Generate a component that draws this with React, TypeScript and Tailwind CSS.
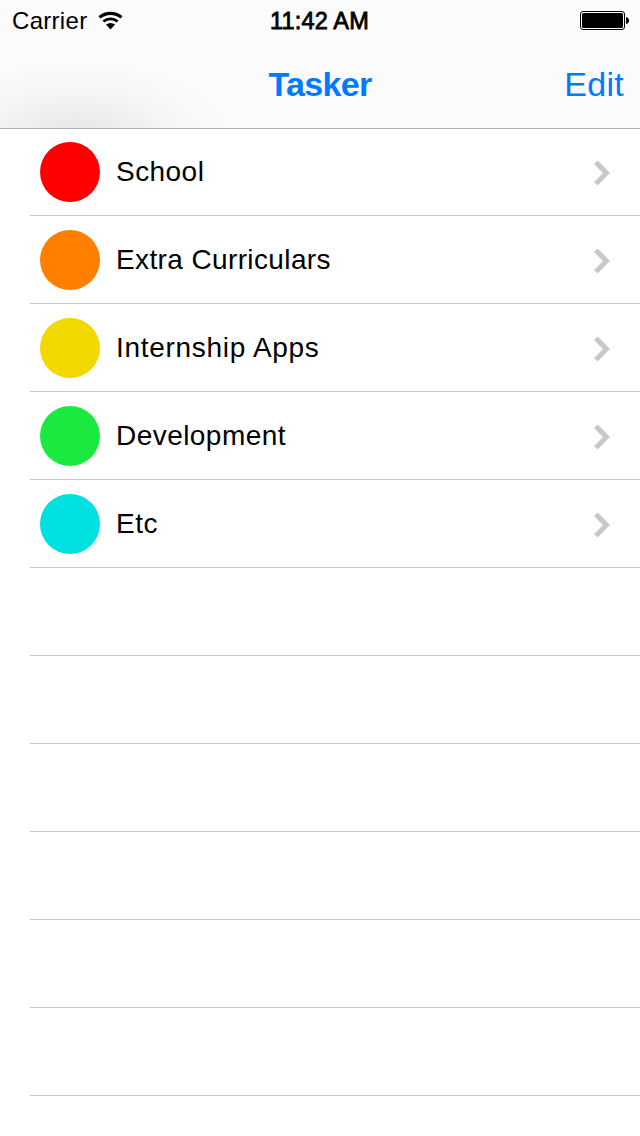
const rows = [
  { name: 'School', color: 'bg-[#ff0000]', tracking: 'tracking-[0.45px]' },
  { name: 'Extra Curriculars', color: 'bg-[#ff8000]', tracking: 'tracking-[0.38px]' },
  { name: 'Internship Apps', color: 'bg-[#f0d800]', tracking: 'tracking-[0.7px]' },
  { name: 'Development', color: 'bg-[#1aea3f]', tracking: 'tracking-[0.45px]' },
  { name: 'Etc', color: 'bg-[#00e0e0]', tracking: 'tracking-[0.5px]' },
];

const emptyRows = [0, 1, 2, 3, 4, 5, 6];

function WifiIcon() {
  return (
    <svg width="26" height="19" viewBox="0 0 26 19">
      <path d="M1.500 6.400a16.800 16.800 0 0 1 22 0" fill="none" stroke="#000" strokeWidth="3.200" />
      <path d="M5.400 10.500a11 11 0 0 1 14.200 0" fill="none" stroke="#000" strokeWidth="2.900" />
      <path d="M7.900 13.500q4.600-3 9.200 0l-4.600 5z" />
    </svg>
  );
}

function BatteryIcon() {
  return (
    <svg className="justify-self-end" width="49" height="20" viewBox="0 0 49 20">
      <rect x=".5" y="1.500" width="44" height="18" rx="2.500" fill="none" stroke="#000" />
      <rect x="2" y="3" width="41" height="15" rx="1.500" />
      <path d="M46 7q3 .5 3 3.500t-3 3.500z" />
    </svg>
  );
}

function Chevron() {
  return (
    <svg className="mt-px" width="16" height="26" viewBox="0 0 16 26">
      <path d="M1.800 2.200l10.700 10.800L1.800 23.800" fill="none" stroke="#c7c7cc" strokeWidth="5" />
    </svg>
  );
}

export default function App() {
  return (
    <div className="flex h-[1136px] w-[640px] flex-col overflow-hidden bg-white font-['Liberation_Sans',sans-serif] text-black">
      <header className="relative h-32 shrink-0 bg-[#fbfbfb] bg-[radial-gradient(ellipse_170px_88px_at_76px_140px,#e6e6e6_0%,#ededed_28%,#f5f5f5_54%,#f9f9f9_78%,#fbfbfb_100%)] shadow-[0_1px_0_#b2b2b2]">
        <div className="grid h-10 grid-cols-3 items-center pl-3 pr-[11px]">
          <div className="flex items-center gap-[11px]">
            <span className="w-[75px] whitespace-nowrap pt-0.5 text-[24px] leading-none tracking-[0.3px]">Carrier</span>
            <WifiIcon />
          </div>
          <span className="mr-0.5 justify-self-center whitespace-nowrap pt-1 text-[23.500px] leading-none tracking-[0.15px] [-webkit-text-stroke:0.8px_#000]">11:42 AM</span>
          <BatteryIcon />
        </div>
        <div className="grid h-[88px] grid-cols-3 items-center px-4 text-[#007aff]">
          <h1 className="col-start-2 justify-self-center text-[34px] font-bold tracking-[-0.7px]">Tasker</h1>
          <button className="justify-self-end text-[34px] tracking-[0.3px]">Edit</button>
        </div>
      </header>
      <main>
        {rows.map((r) => (
          <div key={r.name} className="ml-[30px] flex h-[88px] items-center border-b border-[#c8c7cc] pl-2.5 pr-[30px] pt-px">
            <span className={`mr-4 size-[60px] rounded-full ${r.color}`} />
            <span className={`grow whitespace-nowrap text-[28px] ${r.tracking}`}>{r.name}</span>
            <Chevron />
          </div>
        ))}
        {emptyRows.map((i) => (
          <div key={i} className="ml-[30px] h-[88px] border-b border-[#c8c7cc]" />
        ))}
      </main>
    </div>
  );
}
